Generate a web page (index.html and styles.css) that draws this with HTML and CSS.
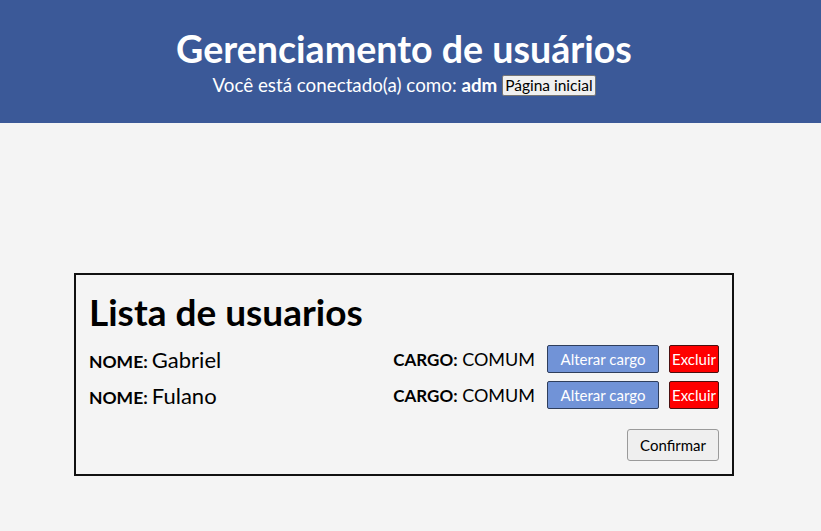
FILE: index.html
```html
<!DOCTYPE html>
<html lang="pt-BR">
<head>
<meta charset="utf-8">
<title>Gerenciamento de usuários</title>
<link rel="stylesheet" href="styles.css">
</head>
<body>
<header class="topo">
  <h1 class="topo-titulo">Gerenciamento de usuários</h1>
  <p class="topo-sub">Você está conectado(a) como: <b>adm</b> <button class="btn-inicio">Página inicial</button></p>
</header>
<main class="conteudo">
  <section class="cartao">
    <h2 class="cartao-titulo">Lista de usuarios</h2>
    <div class="linha">
      <div class="nome"><b>NOME:</b> <span class="valor">Gabriel</span></div>
      <div class="acoes">
        <span class="cargo"><b>CARGO:</b> COMUM</span>
        <button class="btn-alterar">Alterar cargo</button>
        <button class="btn-excluir">Excluir</button>
      </div>
    </div>
    <div class="linha">
      <div class="nome"><b>NOME:</b> <span class="valor">Fulano</span></div>
      <div class="acoes">
        <span class="cargo"><b>CARGO:</b> COMUM</span>
        <button class="btn-alterar">Alterar cargo</button>
        <button class="btn-excluir">Excluir</button>
      </div>
    </div>
    <div class="rodape">
      <button class="btn-confirmar">Confirmar</button>
    </div>
  </section>
</main>
</body>
</html>
```
FILE: styles.css
```css
* { box-sizing: border-box; }
html, body { margin: 0; padding: 0; }
body {
  background: #f4f4f4;
  font-family: Lato, "Open Sans", sans-serif;
  color: #000;
  height: 531px;
}
.topo {
  background: #3b5998;
  color: #fff;
  height: 123px;
  text-align: center;
  padding-top: 28px;
  padding-right: 13px;
}
.topo-titulo {
  margin: 0;
  font-size: 37.6px;
  line-height: 42px;
  font-weight: 700;
}
.topo-sub {
  margin: 4px 0 0;
  font-size: 18.8px;
  line-height: 22px;
}
.topo-sub b { font-weight: 700; }
.btn-inicio {
  font-family: inherit;
  font-size: 15.5px;
  color: #000;
  background: #f0f0f0;
  border: 1px solid #767676;
  border-radius: 2px;
  padding: 0 2px;
  height: 21px;
  vertical-align: 1px;
}
.conteudo {
  padding-top: 150px;
}
.cartao {
  width: 660px;
  margin-left: 74px;
  border: 2px solid #111;
  padding: 16px 13px 13px;
}
.cartao-titulo {
  margin: 0 0 8px;
  font-size: 37px;
  line-height: 42px;
  font-weight: 700;
}
.linha {
  display: flex;
  justify-content: space-between;
  align-items: center;
  height: 36px;
}
.nome b { font-size: 17.5px; font-weight: 700; }
.cargo b { font-size: 17px; font-weight: 700; }
.valor { font-size: 22px; }
.acoes {
  display: flex;
  align-items: center;
}
.cargo { font-size: 18px; margin-right: 12px; }
.btn-alterar {
  font-family: inherit;
  font-size: 15px;
  color: #fff;
  background: #7193d7;
  border: 1px solid #2f3e5c;
  border-radius: 2px;
  width: 112px;
  height: 28px;
  margin-right: 10px;
}
.btn-excluir {
  font-family: inherit;
  font-size: 15px;
  color: #fff;
  background: #ff0000;
  border: 1px solid #4a1010;
  border-radius: 2px;
  width: 50px;
  height: 28px;
  padding: 0;
}
.rodape {
  display: flex;
  justify-content: flex-end;
  margin-top: 16px;
}
.btn-confirmar {
  font-family: inherit;
  font-size: 15px;
  color: #000;
  background: #efefef;
  border: 1px solid #9a9a9a;
  border-radius: 3px;
  width: 92px;
  height: 32px;
}
```
